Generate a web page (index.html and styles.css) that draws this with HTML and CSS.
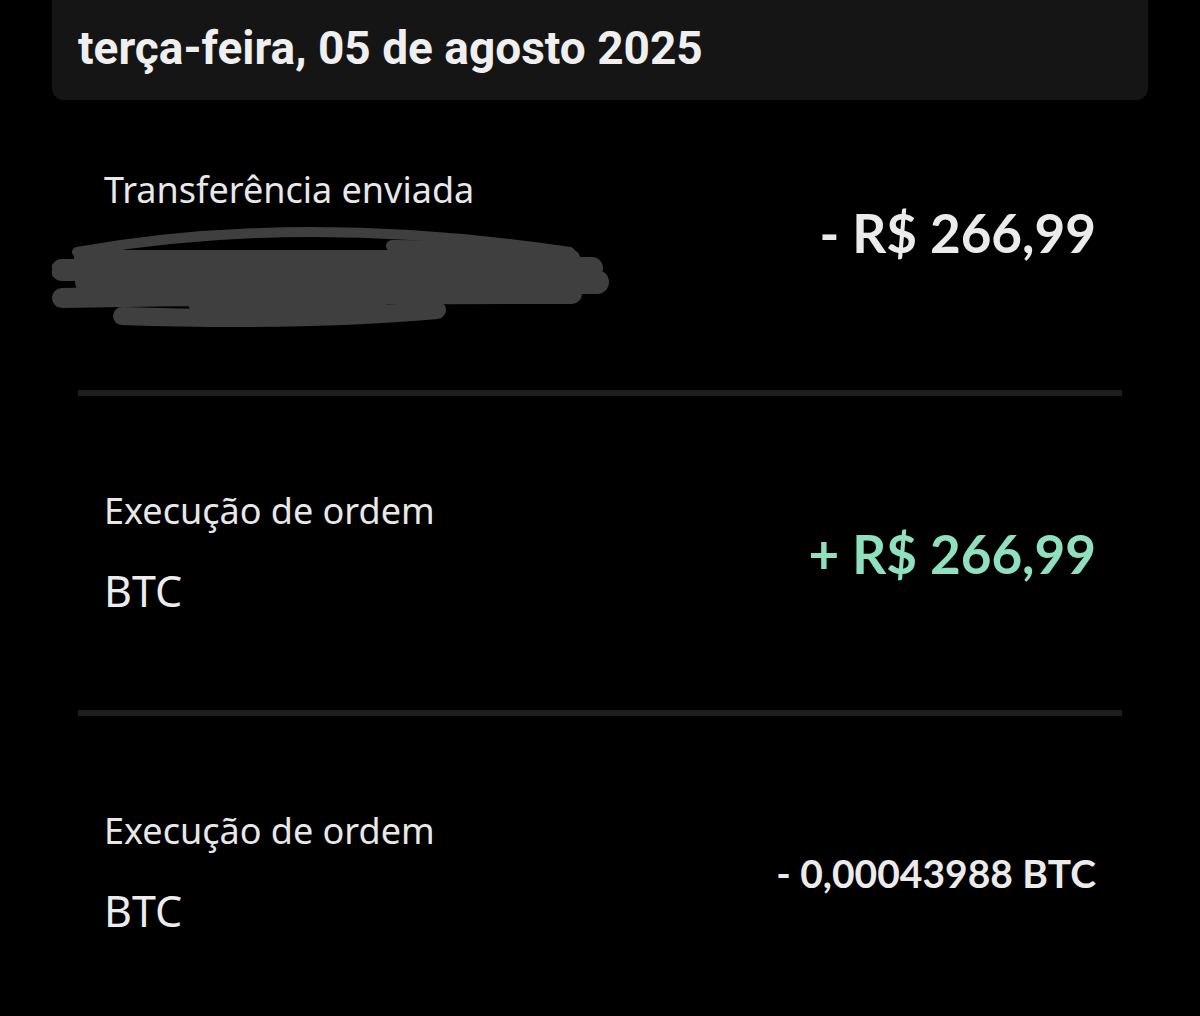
FILE: index.html
```html
<!DOCTYPE html>
<html lang="pt-BR">
<head>
    <meta charset="UTF-8">
    <meta name="viewport" content="width=device-width, initial-scale=1.0">
    <title>Extrato</title>
    <link rel="stylesheet" href="styles.css">
</head>
<body>
    <div class="day-header">
        <h2>terça-feira, 05 de agosto 2025</h2>
    </div>
    <div class="list">
        <div class="row row-first">
            <div class="info">
                <div class="label">Transferência enviada</div>
                <!-- redaction scribble over the recipient name -->
                <svg class="scribble" width="560" height="110" viewBox="0 0 560 110">
                    <g fill="none" stroke="#3f3f3f" stroke-linecap="round" stroke-linejoin="round">
                        <path d="M25 30 Q 250 -10 518 30" stroke-width="10"/>
                        <path d="M340 24 Q 440 24 518 32" stroke-width="12"/>
                        <path d="M30 36 L 520 36" stroke-width="16"/>
                        <path d="M10 48 L 540 46" stroke-width="22"/>
                        <path d="M35 60 L 545 60" stroke-width="24"/>
                        <path d="M10 76 Q 250 72 520 72" stroke-width="20"/>
                        <path d="M70 94 Q 250 100 385 88" stroke-width="18"/>
                        <path d="M150 80 L 320 80" stroke-width="28"/>
                    </g>
                </svg>
            </div>
            <div class="amount">- R$ 266,99</div>
        </div>
        <div class="row">
            <div class="info">
                <div class="label">Execução de ordem</div>
                <div class="asset">BTC</div>
            </div>
            <div class="amount positive">+ R$ 266,99</div>
        </div>
        <div class="row">
            <div class="info">
                <div class="label">Execução de ordem</div>
                <div class="asset">BTC</div>
            </div>
            <div class="amount small">- 0,00043988 BTC</div>
        </div>
    </div>
</body>
</html>
```

FILE: styles.css
```css
body {
    margin: 0;
    background-color: #000;
    color: #ececec;
    font-family: "Noto Sans", Roboto, sans-serif;
    overflow: hidden;
}

.day-header {
    margin: 0 52px;
    height: 100px;
    background-color: #151515;
    border-radius: 0 0 12px 12px;
    display: flex;
    align-items: center;
    padding-left: 26px;
}

.day-header h2 {
    margin: 0;
    font-family: Roboto, sans-serif;
    font-weight: 700;
    font-size: 46px;
    color: #efefef;
    padding-bottom: 4px;
}

.list {
    margin: 0 78px;
}

.row {
    height: 314px;
    display: flex;
    align-items: center;
    justify-content: space-between;
    padding: 0 26px;
    border-bottom: 6px solid #1e1e1e;
}

.row-first {
    height: 290px;
    align-items: flex-start;
}

.row-first .info {
    padding-top: 65px;
}

.row-first .amount {
    margin-top: 101px;
}

.label {
    font-size: 36px;
    color: #e8e8e8;
}

.asset {
    font-size: 43px;
    color: #ececec;
    margin-top: 26px;
}

.scribble {
    display: block;
    margin: 8px 0 0 -52px;
}

.amount {
    font-family: Lato, sans-serif;
    font-weight: 700;
    font-size: 53px;
    color: #ebebeb;
}

.amount.positive {
    color: #8fe0bf;
}

.amount.small {
    font-size: 39px;
}
```
